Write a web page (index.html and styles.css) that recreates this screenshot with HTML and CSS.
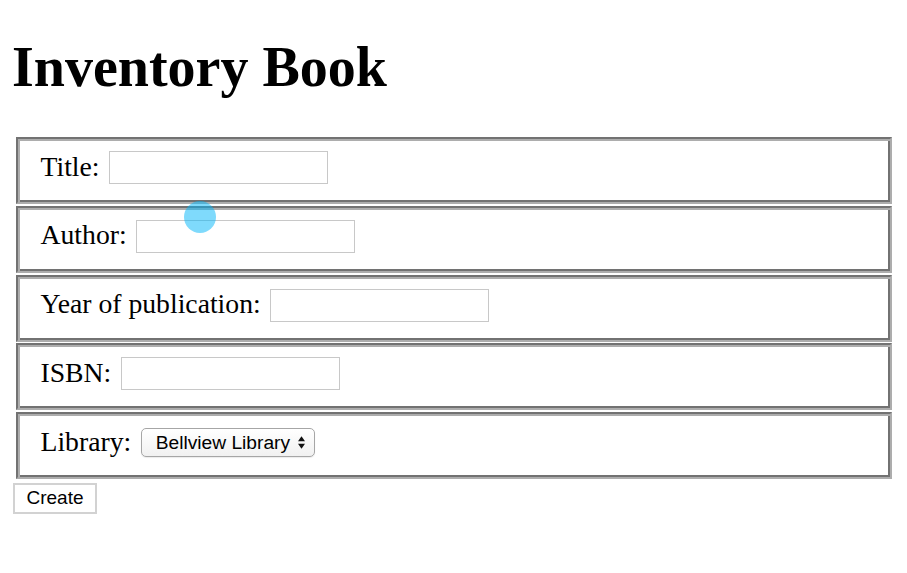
FILE: index.html
```html
<!DOCTYPE html>
<html>
<head>
<meta charset="utf-8">
<title>Inventory Book</title>
<link rel="stylesheet" href="styles.css">
</head>
<body>
<h1 class="title">Inventory Book</h1>
<form class="book-form">
  <div class="field">
    <label class="field-label" for="title">Title:</label>
    <input class="text-input" id="title" type="text">
  </div>
  <div class="field">
    <label class="field-label" for="author">Author:</label>
    <input class="text-input" id="author" type="text">
  </div>
  <div class="field">
    <label class="field-label" for="year">Year of publication:</label>
    <input class="text-input" id="year" type="text">
  </div>
  <div class="field">
    <label class="field-label" for="isbn">ISBN:</label>
    <input class="text-input" id="isbn" type="text">
  </div>
  <div class="field">
    <label class="field-label" for="library">Library:</label>
    <div class="select">
      <span class="select-text">Bellview Library</span>
      <svg class="select-arrows" width="7" height="13" viewBox="0 0 7 13"><path d="M3.5 0.3 L7 5.2 L0 5.2 Z" fill="#111"/><path d="M0 7.8 L7 7.8 L3.5 12.7 Z" fill="#111"/></svg>
    </div>
  </div>
</form>
<button class="create-btn" type="button">Create</button>
<div class="click-dot"></div>
</body>
</html>
```

FILE: styles.css
```css
html, body {
  margin: 0;
  padding: 0;
  background: #fff;
}

body {
  position: relative;
  width: 907px;
  height: 573px;
  overflow: hidden;
  font-family: "Liberation Serif", "Times New Roman", serif;
  color: #000;
}

.title {
  margin: 35px 12px 38px;
  font-size: 56px;
  line-height: 64px;
  font-weight: bold;
}

.book-form {
  display: flex;
  flex-direction: column;
  gap: 1.75px;
  margin: 0 15px 0 16px;
}

.field {
  box-sizing: border-box;
  height: 67px;
  display: flex;
  align-items: center;
  padding: 10px 0 16px 22.5px;
  border: 2px solid;
  border-color: #727272 #adadad #adadad #727272;
  box-shadow: inset 2px 2px 0 #adadad, inset -2px -2px 0 #727272;
}

.field-label {
  font-size: 27.7px;
  line-height: 31px;
  margin-right: 9.5px;
  margin-bottom: 3px;
  white-space: nowrap;
}

.text-input {
  box-sizing: border-box;
  width: 219px;
  height: 33px;
  margin: 0;
  border: 1px solid #c8c8c8;
  background: #fff;
  padding: 0 4px;
  font-size: 18px;
}

.select {
  box-sizing: border-box;
  width: 174px;
  height: 29px;
  display: flex;
  align-items: center;
  justify-content: space-between;
  padding: 0 9px 0 14px;
  border: 1px solid #a6a6a6;
  border-radius: 5px;
  background: linear-gradient(#ffffff, #f1f1f1);
  box-shadow: 0 1px 1px rgba(0, 0, 0, 0.08);
}

.select-text {
  font-family: "Liberation Sans", Arial, sans-serif;
  font-size: 19.2px;
  color: #000;
  white-space: nowrap;
}

.select-arrows {
  display: block;
}

.create-btn {
  display: block;
  box-sizing: border-box;
  margin: 3.7px 0 0 13px;
  width: 84px;
  height: 31.5px;
  padding: 0;
  border: 2px solid #d2d2d2;
  border-radius: 0;
  background: #fff;
  font-family: "Liberation Sans", Arial, sans-serif;
  font-size: 19px;
  color: #000;
}

.click-dot {
  position: absolute;
  left: 184px;
  top: 200.5px;
  width: 32px;
  height: 32px;
  border-radius: 50%;
  background: rgba(0, 182, 250, 0.5);
}
```
